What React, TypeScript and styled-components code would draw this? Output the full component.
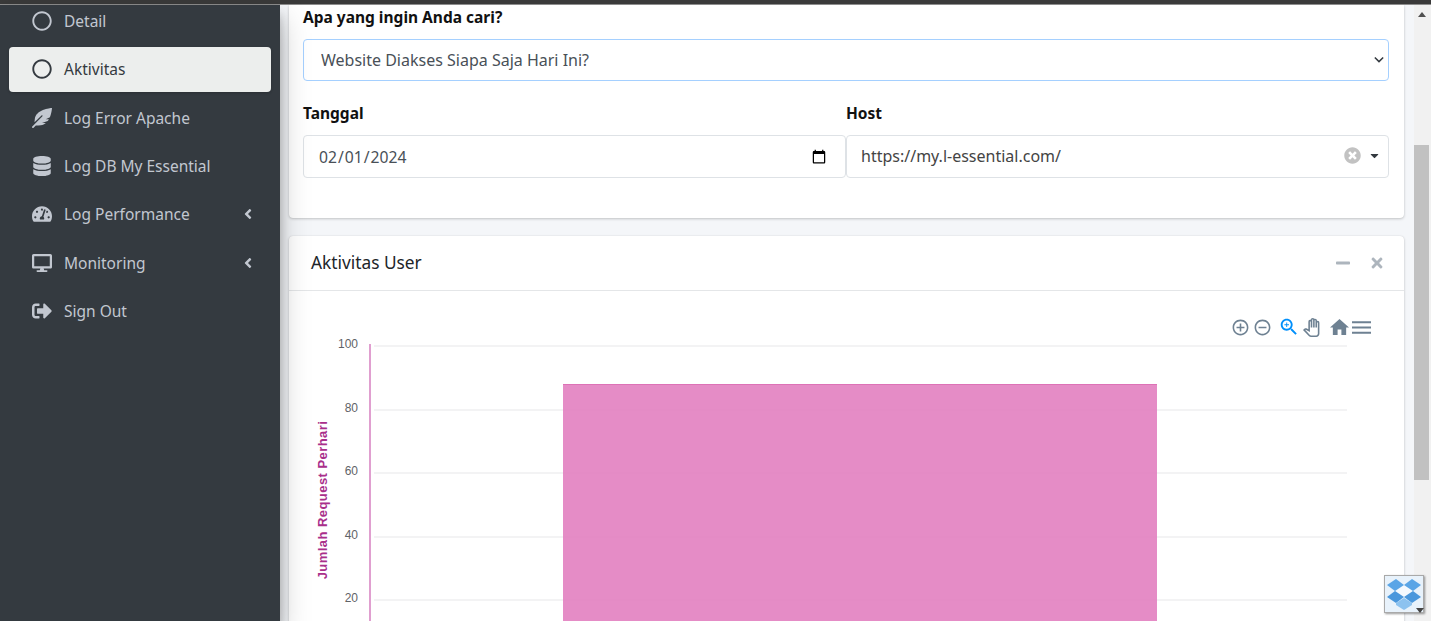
import { ReactNode } from 'react';
import styled, { createGlobalStyle } from 'styled-components';
import {
  FaAngleLeft,
  FaCaretDown,
  FaDatabase,
  FaDesktop,
  FaFeatherAlt,
  FaMinus,
  FaRegCircle,
  FaSignOutAlt,
  FaTachometerAlt,
  FaTimes,
  FaTimesCircle,
} from 'react-icons/fa';
import { MdOutlinePanTool } from 'react-icons/md';

const GlobalStyle = createGlobalStyle`
  html, body {
    margin: 0;
    height: 100%;
    overflow: hidden;
    background: #f4f6f9;
    font-family: "Noto Sans", "Lato", sans-serif;
  }
  * { box-sizing: border-box; }
`;

const Page = styled.div`
  height: 621px;
  display: flex;
  flex-direction: column;
  overflow: hidden;
`;

const TopStrip = styled.div`
  height: 5px;
  flex: none;
  background: #3a3a3a;
  border-bottom: 1px solid #8d8d8d;
`;

const Body = styled.div`
  flex: 1;
  min-height: 0;
  display: flex;
`;

const Sidebar = styled.aside`
  width: 280px;
  flex: none;
  background: #343a40;
  overflow: hidden;
  position: relative;
  z-index: 1;
  box-shadow: 0 14px 28px rgba(0, 0, 0, 0.25), 0 10px 10px rgba(0, 0, 0, 0.22);
`;

const NavList = styled.nav`
  margin-top: -6.4px;
  padding: 0 9px;
  display: flex;
  flex-direction: column;
  gap: 3.3px;
`;

const NavItem = styled.div<{ $active?: boolean }>`
  height: 45px;
  display: flex;
  align-items: center;
  padding: 0 15px 0 21px;
  border-radius: 4px;
  font-size: 15.5px;
  color: ${(p) => (p.$active ? '#343a40' : '#c2c7d0')};
  background: ${(p) => (p.$active ? '#eceeed' : 'transparent')};
  box-shadow: ${(p) => (p.$active ? '0 1px 3px rgba(0,0,0,.2)' : 'none')};
`;

const NavIcon = styled.span`
  width: 24px;
  margin-right: 10px;
  flex: none;
  display: flex;
  justify-content: center;
  font-size: 20px;
`;

const NavLabel = styled.span`
  flex: 1;
`;

const NavCaret = styled(FaAngleLeft)`
  font-size: 16px;
`;

const Main = styled.main`
  flex: 1;
  min-width: 0;
  padding: 0 10px 0 9px;
  display: flex;
  flex-direction: column;
  gap: 18px;
  overflow: hidden;
`;

const Card = styled.section`
  flex: none;
  background: #fff;
  border-radius: 4px;
  box-shadow: 0 0 1px rgba(0, 0, 0, 0.13), 0 1px 3px rgba(0, 0, 0, 0.2);
`;

const FilterCard = styled(Card)`
  height: 213px;
  border-radius: 0 0 4px 4px;
  padding: 1px 15px 0 14px;
`;

const Label = styled.label`
  display: block;
  font-size: 15.5px;
  font-weight: 700;
  line-height: 22px;
  color: #111;
`;

const Select = styled.select`
  display: block;
  width: 100%;
  height: 42px;
  margin: 11px 0 21px;
  padding: 0 12px 0 17px;
  appearance: none;
  border: 1px solid #a5d0ff;
  border-radius: 4px;
  background: #fff;
  font: inherit;
  font-size: 16px;
  color: #495057;
`;

const SelectBox = styled.div`
  position: relative;
`;

const Chevron = styled.svg`
  position: absolute;
  right: 5px;
  top: 17px;
  width: 10px;
  height: 7px;
  pointer-events: none;
`;

const FieldRow = styled.div`
  display: grid;
  grid-template-columns: 1fr 1fr;
`;

const DateInput = styled.input`
  display: block;
  width: 100%;
  height: 43px;
  margin-top: 11px;
  padding: 0 16px 0 14px;
  border: 1px solid #dee2e6;
  border-radius: 4px;
  background: #fff;
  font: inherit;
  font-size: 15.7px;
  color: #495057;
`;

const HostBox = styled.div`
  height: 43px;
  margin-top: 11px;
  padding: 0 7px 2px 14px;
  display: flex;
  align-items: center;
  border: 1px solid #dee2e6;
  border-radius: 4px;
  font-size: 16px;
  color: #444;
`;

const HostValue = styled.span`
  flex: 1;
`;

const ClearIcon = styled(FaTimesCircle)`
  font-size: 17px;
  color: #c2c2c2;
  margin-right: 7px;
`;

const HostCaret = styled(FaCaretDown)`
  font-size: 13px;
  color: #343a40;
`;

const CardHeader = styled.header`
  height: 55px;
  display: flex;
  align-items: center;
  padding: 0 19px 0 22px;
  border-bottom: 1px solid #e4e6e8;
`;

const CardTitle = styled.h3`
  flex: 1;
  margin: 0;
  padding-bottom: 2px;
  font-size: 17.3px;
  font-weight: 400;
  color: #212529;
`;

const CardTools = styled.div`
  display: flex;
  align-items: center;
  gap: 18px;
  font-size: 16px;
  color: #adb5bd;
`;

const ChartArea = styled.div`
  position: relative;
  height: 420px;
`;

const ChartSvg = styled.svg`
  display: block;
`;

const AxisText = styled.text`
  font-family: "Liberation Sans", Arial, sans-serif;
  font-size: 12px;
  fill: #5f6367;
`;

const AxisTitle = styled.text`
  font-family: "Liberation Sans", Arial, sans-serif;
  font-size: 13px;
  font-weight: 700;
  letter-spacing: 0.45px;
  fill: #a92f8b;
`;

const Toolbar = styled.div`
  position: absolute;
  top: 25px;
  right: 33px;
  display: flex;
  align-items: center;
  gap: 3px;
  color: #6e8192;
`;

const ToolIcon = styled.svg<{ $active?: boolean }>`
  width: 19px;
  height: 19px;
  flex: none;
  fill: ${(p) => (p.$active ? '#008ffb' : 'currentColor')};
`;

const ZoomIcon = styled(ToolIcon)`
  width: 22px;
  height: 22px;
  margin-left: 3px;
`;

const PanIcon = styled(MdOutlinePanTool)`
  font-size: 19px;
  margin: 0 6px 0 -1px;
`;

const ScrollTrack = styled.div`
  width: 17px;
  flex: none;
  background: #f1f1f1;
  display: flex;
  flex-direction: column;
  align-items: flex-start;
`;

const ScrollArrow = styled.div`
  width: 0;
  height: 0;
  margin: 7px 0 0 4px;
  border-left: 4px solid transparent;
  border-right: 4px solid transparent;
  border-bottom: 5px solid #505050;
`;

const ScrollThumb = styled.div`
  width: 15px;
  height: 335px;
  margin-top: 128px;
  background: #c1c1c1;
`;

const DropboxBadge = styled.div`
  position: absolute;
  left: 1384px;
  top: 575px;
  width: 40px;
  height: 38px;
  z-index: 2;
  display: flex;
  align-items: center;
  justify-content: center;
  background: #e8f2fb;
  border: 1px solid #a9a9a9;
  box-shadow: 1px 1px 2px rgba(0, 0, 0, 0.4);
`;

const ResizeGrip = styled.div`
  position: absolute;
  right: -1px;
  bottom: -1px;
  width: 0;
  height: 0;
  border-left: 4px solid transparent;
  border-right: 4px solid transparent;
  border-top: 5px solid #444;
`;

interface MenuEntry {
  label: string;
  icon: ReactNode;
  active?: boolean;
  caret?: boolean;
}

const menu: MenuEntry[] = [
  { label: 'Detail', icon: <FaRegCircle /> },
  { label: 'Aktivitas', icon: <FaRegCircle />, active: true },
  { label: 'Log Error Apache', icon: <FaFeatherAlt /> },
  { label: 'Log DB My Essential', icon: <FaDatabase /> },
  { label: 'Log Performance', icon: <FaTachometerAlt />, caret: true },
  { label: 'Monitoring', icon: <FaDesktop />, caret: true },
  { label: 'Sign Out', icon: <FaSignOutAlt /> },
];

const ticks = [
  { label: '100', y: 55 },
  { label: '80', y: 119 },
  { label: '60', y: 182 },
  { label: '40', y: 246 },
  { label: '20', y: 309 },
];

function ActivityChart() {
  return (
    <ChartArea>
      <ChartSvg width="1115" height="420" viewBox="0 0 1115 420">
        {ticks.map((t) => (
          <g key={t.label}>
            <line x1="85" x2="1058" y1={t.y} y2={t.y} stroke="#e7e7e9" strokeWidth="1" />
            <AxisText x="69" y={t.y + 2} textAnchor="end">
              {t.label}
            </AxisText>
          </g>
        ))}
        <line x1="81" x2="81" y1="53" y2="420" stroke="#cc5fb0" strokeWidth="1.2" />
        <rect x="274" y="93" width="594" height="330" fill="#e178bc" fillOpacity="0.85" />
        <line x1="274" x2="868" y1="93.5" y2="93.5" stroke="#dd72b6" strokeWidth="1" />
        <AxisTitle transform="translate(38 209) rotate(-90)" textAnchor="middle">
          Jumlah Request Perhari
        </AxisTitle>
      </ChartSvg>
      <Toolbar>
        <ToolIcon viewBox="0 0 24 24">
          <path d="M13 7h-2v4H7v2h4v4h2v-4h4v-2h-4V7zm-1-5C6.48 2 2 6.48 2 12s4.48 10 10 10 10-4.48 10-10S17.52 2 12 2zm0 18c-4.41 0-8-3.59-8-8s3.59-8 8-8 8 3.59 8 8-3.59 8-8 8z" />
        </ToolIcon>
        <ToolIcon viewBox="0 0 24 24">
          <path d="M7 11v2h10v-2H7zm5-9C6.48 2 2 6.48 2 12s4.48 10 10 10 10-4.48 10-10S17.52 2 12 2zm0 18c-4.41 0-8-3.59-8-8s3.59-8 8-8 8 3.59 8 8-3.59 8-8 8z" />
        </ToolIcon>
        <ZoomIcon $active viewBox="0 0 24 24">
          <path d="M15.5 14h-.79l-.28-.27C15.41 12.59 16 11.11 16 9.5 16 5.91 13.09 3 9.5 3S3 5.91 3 9.5 5.91 16 9.5 16c1.61 0 3.09-.59 4.23-1.57l.27.28v.79l5 4.99L20.49 19l-4.99-5zm-6 0C7.01 14 5 11.99 5 9.5S7.01 5 9.5 5 14 7.01 14 9.5 11.99 14 9.5 14z" />
          <path d="M12 10h-2v2H9v-2H7V9h2V7h1v2h2v1z" />
        </ZoomIcon>
        <PanIcon />
        <ToolIcon viewBox="2 2 20 20">
          <path d="M10 20v-6h4v6h5v-8h3L12 3 2 12h3v8z" />
        </ToolIcon>
        <ToolIcon viewBox="3 3 18 18">
          <path d="M3 18h18v-2H3v2zm0-5h18v-2H3v2zm0-7v2h18V6H3z" />
        </ToolIcon>
      </Toolbar>
    </ChartArea>
  );
}

function App() {
  return (
    <>
      <GlobalStyle />
      <Page>
        <TopStrip />
        <Body>
          <Sidebar>
            <NavList>
              {menu.map((item) => (
                <NavItem key={item.label} $active={item.active}>
                  <NavIcon>{item.icon}</NavIcon>
                  <NavLabel>{item.label}</NavLabel>
                  {item.caret && <NavCaret />}
                </NavItem>
              ))}
            </NavList>
          </Sidebar>
          <Main>
            <FilterCard>
              <Label>Apa yang ingin Anda cari?</Label>
              <SelectBox>
                <Select defaultValue="siapa">
                  <option value="siapa">Website Diakses Siapa Saja Hari Ini?</option>
                </Select>
                <Chevron viewBox="0 0 12 8">
                  <path d="M1 1.5l5 5 5-5" fill="none" stroke="#343a40" strokeWidth="1.8" />
                </Chevron>
              </SelectBox>
              <FieldRow>
                <div>
                  <Label>Tanggal</Label>
                  <DateInput type="date" defaultValue="2024-02-01" />
                </div>
                <div>
                  <Label>Host</Label>
                  <HostBox>
                    <HostValue>https://my.l-essential.com/</HostValue>
                    <ClearIcon />
                    <HostCaret />
                  </HostBox>
                </div>
              </FieldRow>
            </FilterCard>
            <Card>
              <CardHeader>
                <CardTitle>Aktivitas User</CardTitle>
                <CardTools>
                  <FaMinus />
                  <FaTimes />
                </CardTools>
              </CardHeader>
              <ActivityChart />
            </Card>
          </Main>
          <ScrollTrack>
            <ScrollArrow />
            <ScrollThumb />
          </ScrollTrack>
        </Body>
      </Page>
      <DropboxBadge>
        <svg width="36" height="32" viewBox="0 0 36 32">
          <path d="M9 13l9 6 9-6-9-6z" fill="#f4f9fe" />
          <path d="M10 1L1 7l8 6 9-6z" fill="#5aa5e6" />
          <path d="M26 1l9 6-8 6-9-6z" fill="#5aa5e6" />
          <path d="M9 13l-8 6 9 6 8-6z" fill="#4a97dc" />
          <path d="M27 13l8 6-9 6-8-6z" fill="#4a97dc" />
          <path d="M10 25l8-5 8 5v2l-8 5-8-5z" fill="#8cc2ef" />
        </svg>
        <ResizeGrip />
      </DropboxBadge>
    </>
  );
}

export default App;
